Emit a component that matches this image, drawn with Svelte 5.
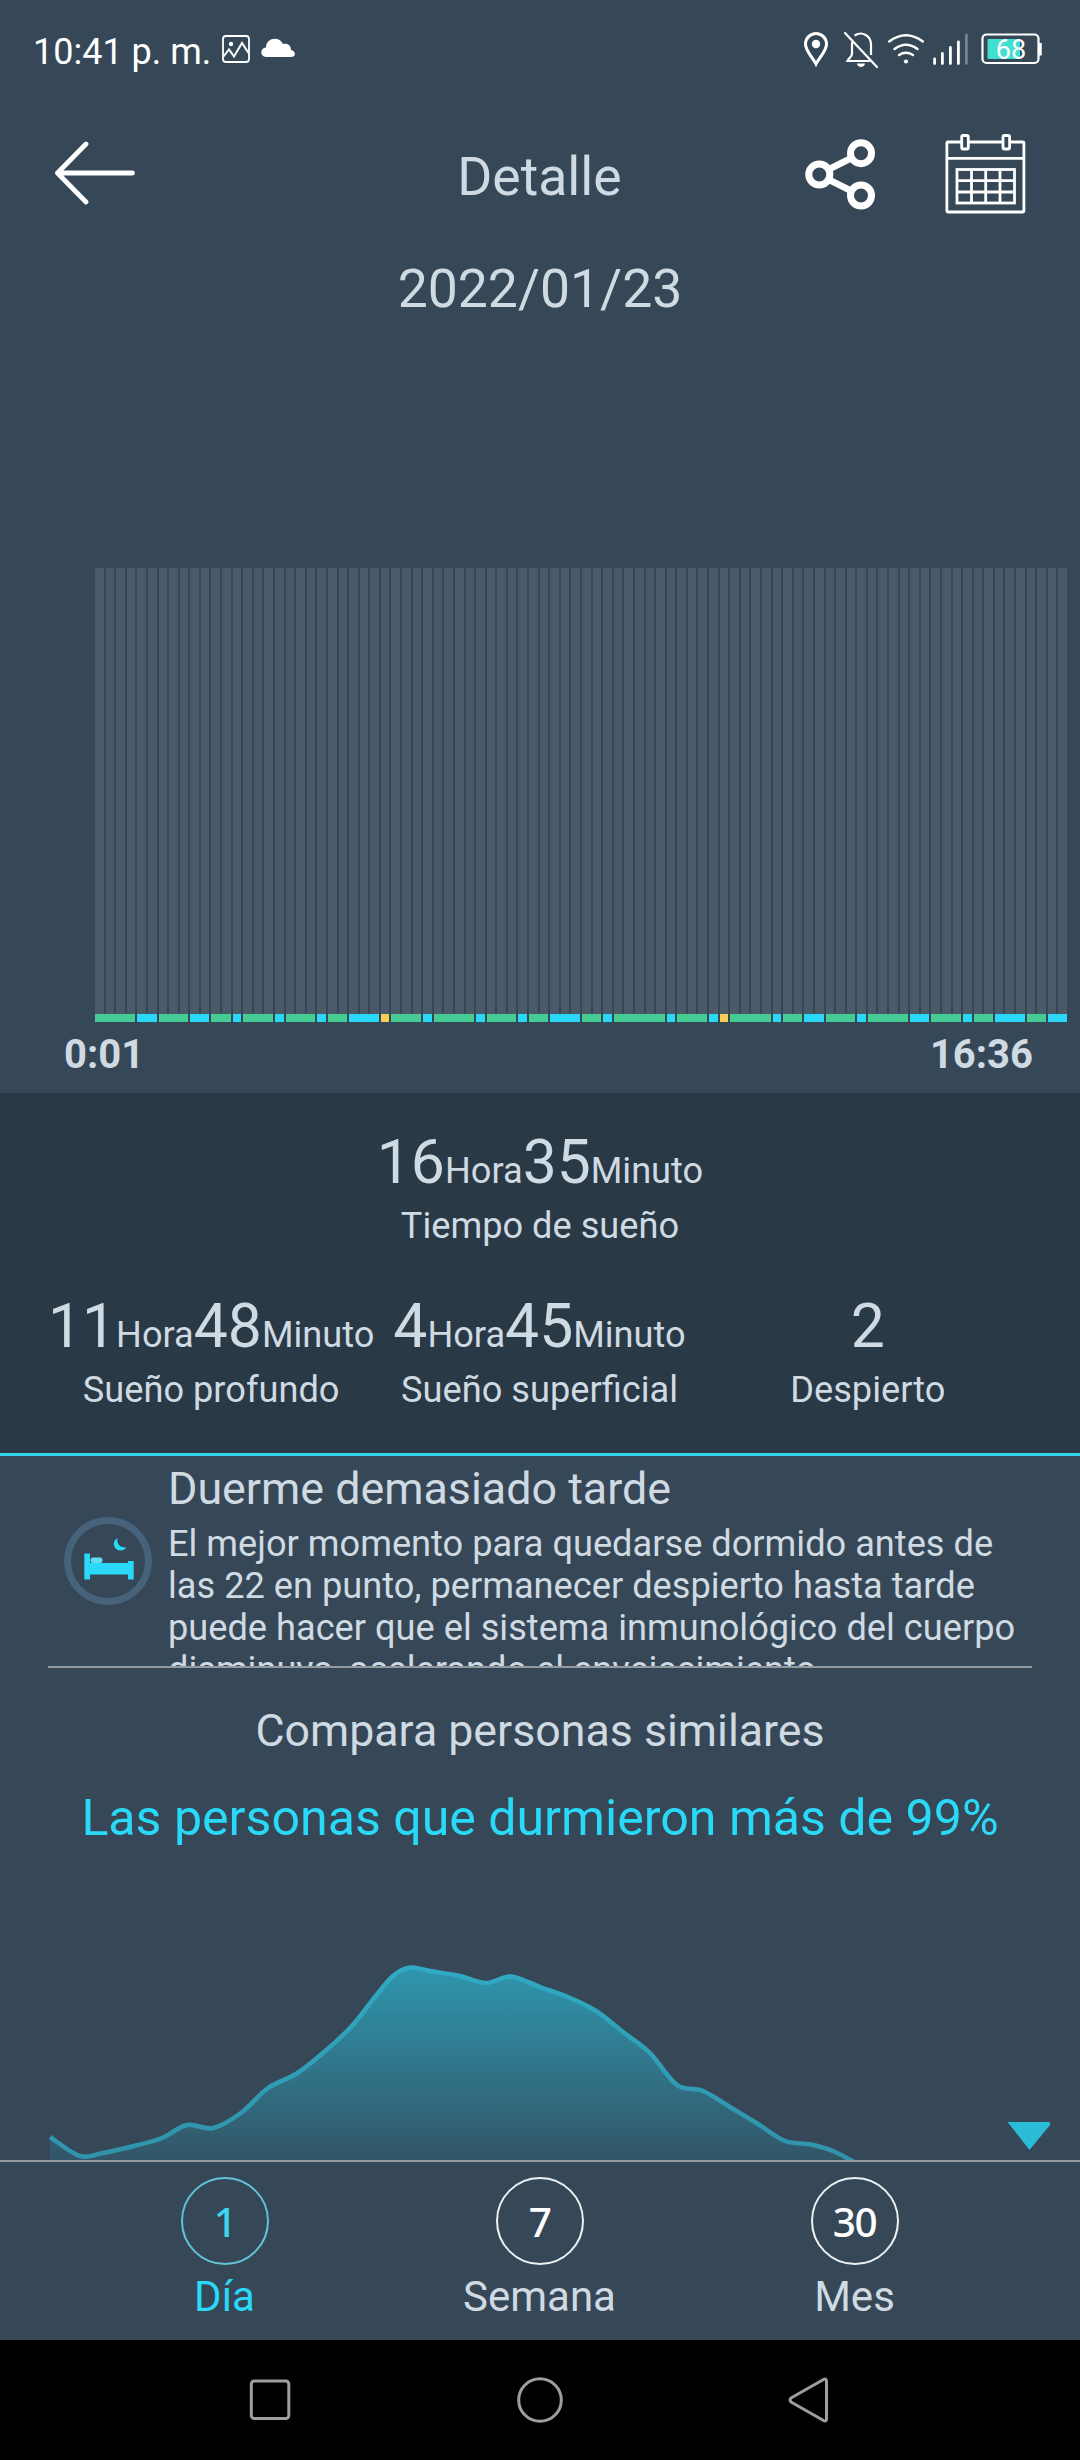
<script>
  // Number of time slots shown in the sleep chart
  const slotCount = 92;

  // Sleep stages in order: d = deep, l = light, a = awake, number = slots
  const stages =
    'd4 l2 d3 l2 d2 l1 d3 l1 d3 l1 d2 l3 a1 d3 l1 d4 l1 d3 l1 d2 l3 d2 l1 d5 l1 d3 l1 a1 d4 l1 d2 l2 d3 l1 d4 l2 d3 l1 d2 l3 d2 l2'
      .split(' ')
      .map((s) => ({ type: s[0], span: Number(s.slice(1)) }));

  const totals = [
    { hours: 11, minutes: 48, label: 'Sueño profundo' },
    { hours: 4, minutes: 45, label: 'Sueño superficial' },
    { count: 2, label: 'Despierto' }
  ];

  const tabs = [
    { value: '1', label: 'Día' },
    { value: '7', label: 'Semana' },
    { value: '30', label: 'Mes' }
  ];
  let active = $state('1');

  // Points of the comparison curve
  const points = [
    [50, 197], [80, 216], [103, 213], [134, 206], [162, 198], [187, 185],
    [213, 188], [241, 173], [268, 148], [296, 134], [323, 113], [351, 87],
    [375, 57], [393, 36], [410, 27.5], [430, 31], [458, 35.5], [486, 43],
    [511, 36.5], [540, 47], [568, 57], [596, 71], [623, 92], [650, 113],
    [677, 145], [703, 151], [730, 167], [758, 184], [785, 201], [811, 204.5],
    [833, 211], [856, 223]
  ];

  // Build a smooth path through the points
  function smoothPath(pts) {
    let d = `M${pts[0][0]} ${pts[0][1]}`;
    for (let i = 0; i < pts.length - 1; i++) {
      const p0 = pts[i - 1] || pts[i];
      const p1 = pts[i];
      const p2 = pts[i + 1];
      const p3 = pts[i + 2] || p2;
      d += ` C${p1[0] + (p2[0] - p0[0]) / 6} ${p1[1] + (p2[1] - p0[1]) / 6}`;
      d += ` ${p2[0] - (p3[0] - p1[0]) / 6} ${p2[1] - (p3[1] - p1[1]) / 6}`;
      d += ` ${p2[0]} ${p2[1]}`;
    }
    return d;
  }

  const curve = smoothPath(points);
</script>

{#snippet duration(hours, minutes)}
  <p class="duration">{hours}<small>Hora</small>{minutes}<small>Minuto</small></p>
{/snippet}

<div class="screen">
  <!-- Phone status bar -->
  <div class="status">
    <span class="clock">10:41 p. m.</span>
    <svg class="status-left" viewBox="220 0 78 100" width="78" height="100" fill="none" stroke="#fff">
      <rect x="223" y="36" width="26" height="26" rx="3" stroke-width="1.8" />
      <circle cx="231" cy="44" r="2.2" fill="#fff" stroke="none" />
      <path d="M223.500 56.500l5.500-7 5 7 8-13.500 6.500 10" stroke-width="2" />
      <path d="M266 57c-6 0-6.500-9 0-9.500 0-10 13.500-12 17-3.500 5-1 8 1.500 8 6 5 1 5.500 7 0 7z" fill="#fff" stroke="none" />
    </svg>
    <svg class="status-right" viewBox="800 0 245 100" width="245" height="100" fill="none" stroke="#fff">
      <path d="M816 64c-4-7.500-10.500-13-10.500-20a10.500 10.500 0 0 1 21 0c0 7-6.500 12.500-10.500 20z" stroke-width="3" />
      <circle cx="816" cy="44" r="4.200" fill="#fff" stroke="none" />
      <g stroke-width="2.200">
        <path d="M845 33l32 34" stroke-linecap="round" />
        <path d="M854.500 35.500c8-5 16.500.5 16.500 9v10.500" />
        <path d="M852 42v12c0 2.500-3 4-4.500 7h22.500" />
        <path d="M857 63.500h8c-.5 4.500-7.500 4.500-8 0z" fill="#fff" stroke="none" />
      </g>
      <g stroke-width="2.400" stroke-linecap="round">
        <path d="M889.200 41.500q16.800-12.500 33.600 0" />
        <path d="M894.500 49q11.500-8.500 23 0" />
        <path d="M899 55q7-4.500 14 0" />
        <circle cx="906" cy="61.500" r="2.100" fill="#fff" stroke="none" />
      </g>
      <g stroke-width="2.800" stroke-linecap="round">
        <path d="M934.600 59v4.500M942.400 53.500v10M950.400 47.500v16M958.400 42v21.500" />
        <path d="M966.400 35v28.500" stroke="#76838e" />
      </g>
      <rect x="982.500" y="34.500" width="56" height="28.500" rx="4" stroke-width="2.200" />
      <path d="M1040 43v12.500" stroke-width="3.500" />
      <rect x="987.500" y="39" width="32.500" height="20" rx="1" fill="#40e0d0" stroke="none" />
      <text x="1011" y="59.200" class="battery" fill="#fff" stroke="none" text-anchor="middle">68</text>
    </svg>
  </div>

  <!-- Title bar -->
  <header>
    <svg class="back" width="84" height="64" viewBox="53.500 141 84 64" fill="none" stroke="#fff" stroke-width="4.800" stroke-linecap="round" stroke-linejoin="round">
      <path d="M133 173H58M86.500 144L58 173l28.500 29" />
    </svg>
    <h1>Detalle</h1>
    <div class="actions">
      <svg width="72" height="76" viewBox="804 136 72 76" fill="none" stroke="#fff" stroke-width="7">
        <circle cx="819.300" cy="174.500" r="10.500" />
        <circle cx="861" cy="153.200" r="10.500" />
        <circle cx="861" cy="195.500" r="10.500" />
        <path d="M828.500 169.500l23-11.500M828.500 179.500l23 11.500" stroke-width="6.500" />
      </svg>
      <svg width="81" height="82" viewBox="944.500 133 81 82" fill="none" stroke="#fff" stroke-width="2.800">
        <rect x="946.400" y="142" width="77" height="70" rx="1" />
        <path d="M946 158.300h77.500" />
        <g class="ring">
          <rect x="961.200" y="135.500" width="6.600" height="13.500" rx="1.500" />
          <rect x="1002.500" y="135.500" width="6.600" height="13.500" rx="1.500" />
        </g>
        <rect x="956.500" y="169.500" width="57.500" height="33.500" />
        <path d="M971 169v34M985.200 169v34M999.500 169v34M956 180.700h58M956 192h58" />
      </svg>
    </div>
  </header>
  <p class="date">2022/01/23</p>

  <!-- Sleep chart -->
  <section class="chart">
    <div class="slots">
      {#each Array(slotCount) as _}
        <i></i>
      {/each}
    </div>
    <div class="stages">
      {#each stages as stage}
        <i class={stage.type} style="grid-column: span {stage.span}"></i>
      {/each}
    </div>
    <div class="times"><span>0:01</span><span>16:36</span></div>
  </section>

  <!-- Totals -->
  <section class="totals">
    <div class="total">
      {@render duration(16, 35)}
      <p class="label">Tiempo de sueño</p>
    </div>
    <div class="columns">
      {#each totals as item}
        <div class="total">
          {#if item.count}
            <p class="duration">{item.count}</p>
          {:else}
            {@render duration(item.hours, item.minutes)}
          {/if}
          <p class="label">{item.label}</p>
        </div>
      {/each}
    </div>
  </section>

  <!-- Advice -->
  <section class="advice">
    <svg width="88" height="88" viewBox="64 1517 88 88">
      <circle cx="108" cy="1561" r="40.500" fill="none" stroke="#46637b" stroke-width="7" />
      <g fill="#29d9f7">
        <path d="M84.300 1553.500h5.700v9.500h38v-2h5.700v18.500H128v-5H90v5h-5.700z" />
        <rect x="90.500" y="1557.500" width="12" height="5.500" rx="2.500" fill="#5fdcf2" />
        <path d="M117.500 1538c-1 6 2.500 10 9 9.500-3.500 5-11 3.500-12.500-2-.8-3 .8-6 3.500-7.500z" />
      </g>
    </svg>
    <div class="advice-text">
      <h2>Duerme demasiado tarde</h2>
      <!-- The text is longer than the card, the last line is clipped -->
      <p>El mejor momento para quedarse dormido antes de las 22 en punto, permanecer despierto hasta tarde puede hacer que el sistema inmunológico del cuerpo disminuya, acelerando el envejecimiento</p>
    </div>
  </section>

  <!-- Comparison with similar people -->
  <section class="compare">
    <h2>Compara personas similares</h2>
    <p>Las personas que durmieron más de 99%</p>
    <svg width="1080" height="220" viewBox="0 0 1080 220">
      <defs>
        <linearGradient id="area" x1="0" y1="27" x2="0" y2="220" gradientUnits="userSpaceOnUse">
          <stop offset="0" stop-color="#2e97ae" />
          <stop offset="1" stop-color="#335568" />
        </linearGradient>
        <linearGradient id="line" x1="0" y1="27" x2="0" y2="220" gradientUnits="userSpaceOnUse">
          <stop offset="0" stop-color="#30aac4" />
          <stop offset="1" stop-color="#3093ab" />
        </linearGradient>
      </defs>
      <path d="{curve} L856 230 L50 230z" fill="url(#area)" />
      <path d={curve} fill="none" stroke="url(#line)" stroke-width="4.500" />
      <path d="M1007.500 182H1050v3l-20.500 25z" fill="#2abbd6" />
    </svg>
  </section>

  <!-- Period tabs -->
  <nav class="tabs">
    {#each tabs as tab}
      <button class:active={active === tab.value} onclick={() => (active = tab.value)}>
        <span class="circle">{tab.value}</span>
        {tab.label}
      </button>
    {/each}
  </nav>

  <!-- Android navigation -->
  <div class="system">
    <svg width="1080" height="120" viewBox="0 0 1080 120" fill="none" stroke="#9e9e9e" stroke-width="3" stroke-linejoin="round">
      <rect x="251.300" y="41" width="37.500" height="37.500" rx="3" />
      <circle cx="540" cy="60" r="21.300" />
      <path d="M791 58L823.500 39.500q3-1.500 3 2v37q0 3.500-3 2L791 62q-2-2 0-4z" />
    </svg>
  </div>
</div>

<style>
  :global(body) {
    background: #364857;
  }
  .screen {
    display: flex;
    flex-direction: column;
    width: 1080px;
    height: 2460px;
    overflow: hidden;
    background: #364857;
    color: #d0dae2;
    font-family: Roboto, sans-serif;
  }
  h1, h2, p {
    margin: 0;
    font-weight: 400;
  }
  svg {
    display: block;
    flex: none;
  }
  /* Status bar */
  .status {
    display: flex;
    height: 100px;
    padding: 0 35px 0 33px;
    color: #fff;
  }
  .clock {
    width: 187px;
    font-size: 36px;
    line-height: 105px;
    white-space: nowrap;
  }
  .status-right {
    margin-left: auto;
  }
  .battery {
    font-size: 27px;
  }
  /* Title bar */
  header {
    display: grid;
    grid-template-columns: 1fr auto 1fr;
    height: 150px;
    padding: 0 54px 0 53px;
  }
  .back {
    margin-top: 41px;
  }
  h1 {
    font-size: 53.500px;
    line-height: 153px;
  }
  .actions {
    display: flex;
    justify-content: flex-end;
    gap: 69.500px;
    padding-top: 33px;
  }
  .actions svg:first-child {
    margin-top: 3px;
  }
  .ring {
    fill: #364857;
  }
  .date {
    height: 318px;
    font-size: 53.500px;
    line-height: 77px;
    text-align: center;
  }
  /* Sleep chart */
  .chart {
    height: 525px;
  }
  .slots, .stages {
    display: grid;
    grid-template-columns: repeat(92, 1fr);
    column-gap: 2px;
    width: 972px;
    margin-left: 95px;
  }
  .slots {
    height: 446px;
  }
  .slots i {
    background: #4a5a69;
  }
  .stages {
    height: 8px;
  }
  .d {
    background: #45cb94;
  }
  .l {
    background: #29d7f6;
  }
  .a {
    background: #fad052;
  }
  .times {
    display: flex;
    justify-content: space-between;
    padding: 0 47px 0 64px;
    font-size: 40px;
    font-weight: 700;
    line-height: 66px;
  }
  /* Totals */
  .totals {
    height: 360px;
    padding: 0 48px;
    background: #293946;
    border-bottom: 3px solid #34d3ee;
  }
  .total {
    flex: 1 0 0;
    height: 164px;
    text-align: center;
    white-space: nowrap;
  }
  .duration {
    height: 105px;
    font-size: 60.600px;
    line-height: 139px;
  }
  small {
    font-size: 36.200px;
    line-height: 1;
  }
  .label {
    font-size: 36.200px;
    line-height: 56px;
  }
  .columns {
    display: flex;
    margin-left: -1px;
  }
  /* Advice */
  .advice {
    display: flex;
    gap: 16px;
    height: 210px;
    margin: 0 48px;
    padding-left: 16px;
    overflow: hidden;
    border-bottom: 2px solid #94999e;
  }
  .advice svg {
    margin-top: 61px;
  }
  .advice-text h2 {
    height: 67px;
    font-size: 44.800px;
    line-height: 66px;
  }
  .advice-text p {
    font-size: 36.200px;
    line-height: 42px;
    width: 864px;
  }
  /* Comparison */
  .compare {
    height: 492px;
    text-align: center;
    border-bottom: 2px solid #94999e;
  }
  .compare h2 {
    height: 107px;
    font-size: 44.700px;
    line-height: 126px;
  }
  .compare p {
    height: 165px;
    color: #29d9f7;
    font-size: 50.100px;
    line-height: 87px;
  }
  /* Period tabs */
  .tabs {
    display: flex;
    justify-content: center;
    height: 178px;
  }
  button {
    display: flex;
    flex-direction: column;
    align-items: center;
    width: 315px;
    padding: 15px 1px 0 0;
    border: 0;
    background: none;
    color: inherit;
    font: 42px/64px Roboto, sans-serif;
  }
  .circle {
    box-sizing: border-box;
    width: 88px;
    height: 88px;
    border: 2px solid #eef1f4;
    border-radius: 50%;
    color: #fff;
    font: 500 40.500px/85px "Noto Sans", sans-serif;
    letter-spacing: -1.500px;
    text-align: center;
  }
  .active {
    color: #29d9f7;
  }
  .active .circle {
    border-color: #62c3d6;
    color: #3fd5ee;
  }
  /* Android navigation */
  .system {
    height: 120px;
    background: #000;
  }
</style>
